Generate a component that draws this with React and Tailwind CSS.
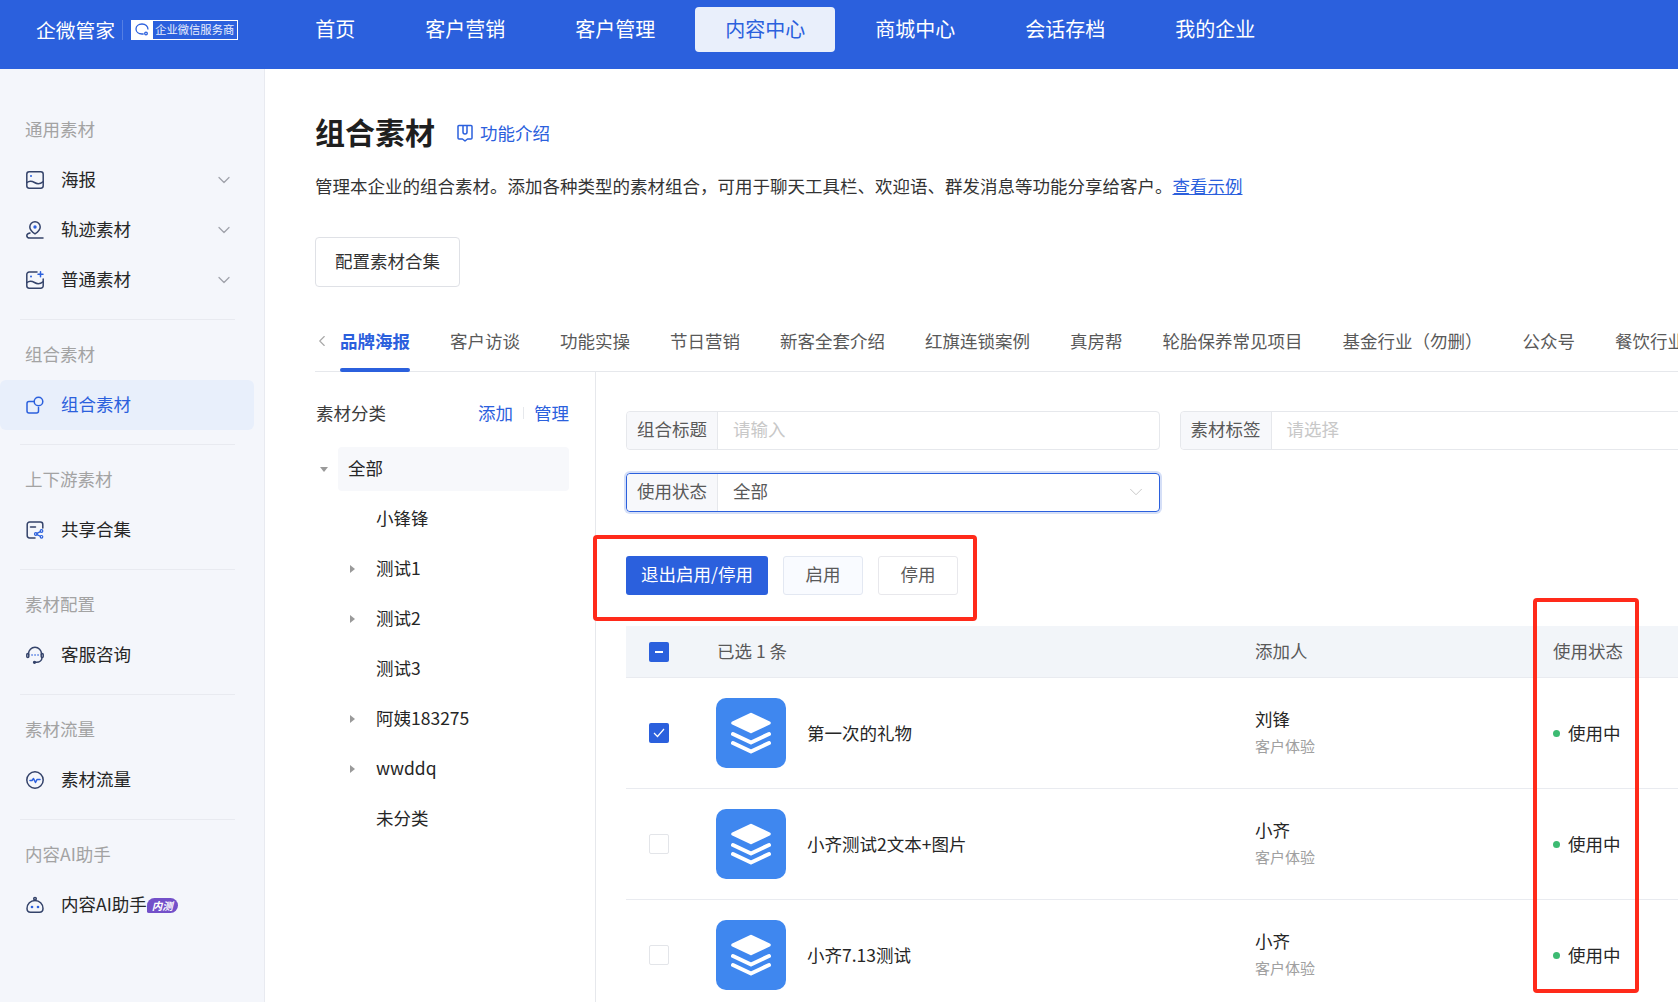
import { ChevronDown, ChevronLeft } from 'lucide-react';

const navItems = ['首页', '客户营销', '客户管理', '内容中心', '商城中心', '会话存档', '我的企业'];
const tabs = ['客户访谈', '功能实操', '节日营销', '新客全套介绍', '红旗连锁案例', '真房帮', '轮胎保养常见项目', '基金行业（勿删）', '公众号', '餐饮行业'];

const tree = [
  { name: '小锋锋' },
  { name: '测试1', arrow: true },
  { name: '测试2', arrow: true },
  { name: '测试3' },
  { name: '阿姨183275', arrow: true },
  { name: 'wwddq', arrow: true },
  { name: '未分类' },
];

const rows = [
  { title: '第一次的礼物', owner: '刘锋', checked: true },
  { title: '小齐测试2文本+图片', owner: '小齐' },
  { title: '小齐7.13测试', owner: '小齐' },
];

const Svg = ({ children }) => (
  <svg width="18" height="18" viewBox="0 0 18 18" fill="none" stroke="#34436a" strokeWidth="1.5" strokeLinecap="round" strokeLinejoin="round" className="shrink-0">
    {children}
  </svg>
);

const PosterIcon = () => (
  <Svg>
    <rect x="0.8" y="0.8" width="16.4" height="16.4" rx="2.4" />
    <path d="M1 11.5c3-2.500 5-1.600 7.500 0s5.500 1.800 8.500-.8" />
    <circle cx="5" cy="5" r="1" fill="#2b60dd" stroke="none" />
  </Svg>
);

const TrackIcon = () => (
  <Svg>
    <path d="M9 12.800c-3-1.900-5.200-3.900-5.200-6.800a5.200 5.200 0 0 1 10.400 0c0 2.900-2.200 4.900-5.200 6.800z" />
    <circle cx="9" cy="6" r="1.700" fill="#2b60dd" stroke="none" />
    <path d="M4 12c-1.900.5-3.200 1.200-3.200 2.400 0 1.600 1.400 2.600 3.200 2.600h13" />
  </Svg>
);

const NormalIcon = () => (
  <Svg>
    <path d="M11 1H3.200A2.400 2.400 0 0 0 .8 3.400v11.400a2.400 2.400 0 0 0 2.400 2.400h11.600a2.400 2.400 0 0 0 2.400-2.400V8" />
    <path d="M1 11.500c3-2.500 5-1.600 7.500 0s5.500 1.800 8.500-.8" />
    <circle cx="5" cy="5.500" r="1" fill="#2b60dd" stroke="none" />
    <path d="M14.500 0.800v5M12 3.300h5" stroke="#2b60dd" />
  </Svg>
);

const ComboIcon = () => (
  <Svg>
    <path d="M8 5.500H3a2 2 0 0 0-2 2V15a2 2 0 0 0 2 2h7.500a2 2 0 0 0 2-2v-3.500" stroke="#2b60dd" />
    <circle cx="12.500" cy="5.500" r="4.300" stroke="#2b60dd" />
  </Svg>
);

const ShareIcon = () => (
  <Svg>
    <path d="M16.800 7V3.400A2.400 2.400 0 0 0 14.400 1H3.600a2.400 2.400 0 0 0-2.400 2.400v11.200A2.400 2.400 0 0 0 3.600 17H9" />
    <path d="M4.500 6h5" />
    <g stroke="#2b60dd" strokeWidth="1.200">
      <circle cx="15.500" cy="10" r="1.300" />
      <circle cx="15.500" cy="15.800" r="1.300" />
      <circle cx="9.800" cy="13" r="1.300" />
      <path d="M11 12.400l3.300-1.800M11 13.600l3.300 1.600" />
    </g>
  </Svg>
);

const ServiceIcon = () => (
  <Svg>
    <path d="M2.500 8.500V7.800a6.500 6.500 0 0 1 13 0v.7" />
    <rect x="0.800" y="7.500" width="2" height="4" rx="1" />
    <rect x="15.200" y="7.500" width="2" height="4" rx="1" />
    <path d="M16 11.500c0 2.800-2.500 4.800-5.500 4.800H9" />
    <circle cx="8.500" cy="16.300" r="0.900" fill="#34436a" />
    <path d="M6 9h.1M9 9h.1M12 9h.1" stroke="#2b60dd" strokeWidth="1.600" />
  </Svg>
);

const FlowIcon = () => (
  <Svg>
    <circle cx="9" cy="9" r="8.200" />
    <path d="M4 9.500h2l1.500-2 2 4 1.500-3h3" stroke="#2b60dd" />
  </Svg>
);

const BotIcon = () => (
  <Svg>
    <path d="M1 12.500a8 8 0 0 1 16 0c0 2.500-1.500 3.700-3.500 3.700h-9C2.500 16.200 1 15 1 12.500z" />
    <circle cx="9" cy="2.800" r="1.300" />
    <path d="M9 4.100v.4" />
    <circle cx="6" cy="11" r="1.300" fill="#2b60dd" stroke="none" />
    <circle cx="12" cy="11" r="1.300" fill="#2b60dd" stroke="none" />
  </Svg>
);

const sideGroups = [
  {
    label: '通用素材',
    items: [
      { name: '海报', icon: PosterIcon, more: true },
      { name: '轨迹素材', icon: TrackIcon, more: true },
      { name: '普通素材', icon: NormalIcon, more: true },
    ],
  },
  { label: '组合素材', items: [{ name: '组合素材', icon: ComboIcon, active: true }] },
  { label: '上下游素材', items: [{ name: '共享合集', icon: ShareIcon }] },
  { label: '素材配置', items: [{ name: '客服咨询', icon: ServiceIcon }] },
  { label: '素材流量', items: [{ name: '素材流量', icon: FlowIcon }] },
  { label: '内容AI助手', items: [{ name: '内容AI助手', icon: BotIcon, beta: true }] },
];

const Logo = () => (
  <div className="flex items-center pl-[36px]">
    <span className="text-[19.800px] text-white">企微管家</span>
    <span className="ml-[7px] mr-[8px] h-[20px] w-px bg-white/20" />
    <div className="flex h-[20px] w-[107px] items-center border border-white">
      <div className="flex h-full w-[21px] items-center justify-center bg-white">
        <svg width="15" height="14" viewBox="0 0 15 14" fill="none" stroke="#2b60dd" strokeWidth="1.300">
          <path d="M7 1C3.500 1 1 3.200 1 6c0 2.800 2.500 5 6 5 .6 0 1.200-.1 1.700-.2" />
          <path d="M13 6.500C13 3.200 10.500 1 7 1" />
          <circle cx="11" cy="10.500" r="1.300" />
        </svg>
      </div>
      <span className="flex-1 whitespace-nowrap pl-[2px] text-[11.300px] text-white/90">企业微信服务商</span>
    </div>
  </div>
);

const Header = () => (
  <header className="flex h-[69px] shrink-0 bg-[#2b60dd] pb-[17px] pt-[7px]">
    <Logo />
    <nav className="ml-[47px] flex gap-[10px]">
      {navItems.map((item) => (
        <a key={item} className={`flex items-center rounded-[4px] px-[30px] pb-[2px] text-[20px] ${item === '内容中心' ? 'bg-[#e9effb] text-[#2b60dd]' : 'text-white'}`}>
          {item}
        </a>
      ))}
    </nav>
  </header>
);

const Sidebar = () => (
  <aside className="w-[265px] shrink-0 border-r border-[#e8eaf0] bg-[#f4f6fb] pt-[36px]">
    {sideGroups.map((group, index) => (
      <div key={group.label}>
        {index > 0 && <div className="ml-[20px] mt-[14px] mb-[10px] h-px w-[215px] bg-[#e8eaf0]" />}
        <div className="flex h-[50px] items-center pb-[2px] pl-[25px] text-[17.500px] text-[#a3a3a3]">{group.label}</div>
        {group.items.map((item) => (
          <div key={item.name} className={`flex h-[50px] w-[254px] items-center rounded-[6px] pl-[26px] ${item.active ? 'bg-[#e8effb]' : ''}`}>
            <item.icon />
            <span className={`ml-[17px] pb-[2px] text-[17.500px] ${item.active ? 'text-[#2b60dd]' : 'text-[#262626]'}`}>{item.name}</span>
            {item.beta && (
              <span className="rounded-[8px] rounded-bl-[2px] bg-[#7350c9] px-[5px] text-[10.500px] font-bold italic leading-[15px] text-white">内测</span>
            )}
            {item.more && <ChevronDown className="ml-auto mr-[20px] h-[20px] w-[20px] text-[#a0a3ab]" strokeWidth={1.5} />}
          </div>
        ))}
      </div>
    ))}
  </aside>
);

const Tabs = () => (
  <div className="mt-[33px] flex h-[52px] shrink-0 items-start border-b border-[#e6e8ec] text-[17.500px] leading-[24px]">
    <ChevronLeft className="-ml-[2px] mt-[12px] h-[18px] w-[18px] shrink-0 text-[#a8a8a8]" strokeWidth={1.500} />
    <div className="relative ml-[9px] h-full shrink-0 pt-[9px] font-bold text-[#2b60dd]">
      品牌海报
      <span className="absolute bottom-[-1px] left-0 h-[4px] w-full rounded-[2px] bg-[#2b60dd]" />
    </div>
    {tabs.map((tab) => (
      <div key={tab} className="ml-[40px] shrink-0 whitespace-nowrap pt-[9px] text-[#595959]">{tab}</div>
    ))}
  </div>
);

const Tree = () => (
  <div className="w-[281px] shrink-0 border-r border-[#e6e8ec] pr-[26px]">
    <div className="flex items-center pt-[28px] text-[17.500px] leading-[26px]">
      <span className="ml-px text-[#3c3c3c]">素材分类</span>
      <a className="ml-auto text-[#2b60dd]">添加</a>
      <span className="mx-[10px] h-[12px] w-px bg-[#e6e8ec]" />
      <a className="text-[#2b60dd]">管理</a>
    </div>
    <div className="mt-[21px] flex items-center">
      <span className="ml-[5px] h-0 w-0 border-x-[4.500px] border-t-[5px] border-x-transparent border-t-[#9a9a9a]" />
      <div className="ml-[10px] flex h-[44px] flex-1 items-center rounded-[4px] bg-[#f7f8fb] pb-[2px] pl-[10px] text-[17.500px] text-[#262626]">全部</div>
    </div>
    {tree.map((node) => (
      <div key={node.name} className="mt-[6px] flex h-[44px] items-center text-[17.500px] text-[#262626]">
        <span className="flex w-[61px] justify-end pr-[21px]">
          {node.arrow && <span className="h-0 w-0 border-y-[4.500px] border-l-[5px] border-y-transparent border-l-[#9a9a9a]" />}
        </span>
        <span className="pb-[2px]">{node.name}</span>
      </div>
    ))}
  </div>
);

const Field = ({ label, value, placeholder, focused, children }) => (
  <div className={`flex w-[534px] shrink-0 items-stretch rounded-[4px] border text-[17.500px] ${focused ? 'h-[39.500px] border-[#2b60dd] ring-2 ring-[#d5dff7]' : 'h-[39px] border-[#e6e8ec]'}`}>
    <div className="flex w-[91px] items-center justify-center rounded-l-[4px] border-r border-[#e6e8ec] bg-[#f7f8fb] pb-[2px] text-[#595959]">{label}</div>
    <div className={`flex flex-1 items-center pl-[15px] pr-[12px] ${placeholder ? 'text-[#c8c8c8]' : 'text-[#595959]'}`}>
      <span className="pb-[2px]">{placeholder || value}</span>
      {children}
    </div>
  </div>
);

const Checkbox = ({ state }) => {
  if (state === 'minus') {
    return (
      <span className="flex h-[20px] w-[20px] items-center justify-center rounded-[2px] bg-[#2b60dd]">
        <span className="h-[2px] w-[8px] bg-white" />
      </span>
    );
  }
  if (state === 'checked') {
    return (
      <span className="flex h-[20px] w-[20px] items-center justify-center rounded-[2px] bg-[#2b60dd]">
        <svg width="12" height="10" viewBox="0 0 12 10" fill="none" stroke="white" strokeWidth="1.200">
          <path d="M1 5l3.500 3.500L11 1" />
        </svg>
      </span>
    );
  }
  return <span className="h-[20px] w-[20px] rounded-[2px] border border-[#e3e5e9] bg-white" />;
};

const StackIcon = () => (
  <div className="flex h-[70px] w-[70px] shrink-0 items-center justify-center rounded-[10px] bg-[#3f87ef]">
    <svg width="70" height="70" viewBox="0 0 70 70" fill="none" stroke="white" strokeLinecap="round" strokeLinejoin="round">
      <path d="M35 16.500L53 25L35 33.500L17 25Z" fill="white" strokeWidth="3.500" />
      <path d="M17 36L35 44.500L53 36" strokeWidth="4" />
      <path d="M17 45L35 53.500L53 45" strokeWidth="4" />
    </svg>
  </div>
);

const Table = () => (
  <div className="mt-[31px]">
    <div className="flex h-[52px] items-center border-b border-[#e9ebf0] bg-[#f2f5f9] text-[17.500px] text-[#595959]">
      <div className="w-[91px] pl-[23px]">
        <Checkbox state="minus" />
      </div>
      <div className="w-[538px]">已选 1 条</div>
      <div className="w-[298px]">添加人</div>
      <div>使用状态</div>
    </div>
    {rows.map((row) => (
      <div key={row.title} className="flex h-[111px] items-center border-b border-[#e9ebf0] text-[17.500px] text-[#262626]">
        <div className="flex w-[90px] pl-[23px]">
          <Checkbox state={row.checked ? 'checked' : undefined} />
        </div>
        <div className="flex w-[539px] items-center">
          <StackIcon />
          <span className="ml-[21px]">{row.title}</span>
        </div>
        <div className="w-[298px] pb-[2px]">
          <div className="leading-[26px]">{row.owner}</div>
          <div className="mt-[2px] text-[15px] leading-[24px] text-[#a0a0a0]">客户体验</div>
        </div>
        <div className="flex items-center">
          <span className="h-[7px] w-[7px] rounded-full bg-[#3dbb72]" />
          <span className="ml-[8px]">使用中</span>
        </div>
      </div>
    ))}
  </div>
);

const Content = () => (
  <div className="min-w-0 flex-1 overflow-hidden pl-[30px] pt-[39px]">
    <div className="flex gap-[19.500px]">
      <Field label="组合标题" placeholder="请输入" />
      <Field label="素材标签" placeholder="请选择" />
    </div>
    <div className="mt-[22.500px]">
      <Field label="使用状态" value="全部" focused>
        <ChevronDown className="ml-auto h-[22px] w-[22px] text-[#c4c4c4]" strokeWidth={1} />
      </Field>
    </div>
    <div className="mt-[44px] flex gap-[15px] text-[17.500px]">
      <button className="h-[39px] w-[142px] rounded-[3px] bg-[#2b60dd] pb-[2px] text-white">退出启用/停用</button>
      <button className="h-[39px] w-[80px] rounded-[3px] border border-[#e3e8f2] bg-[#f9fbff] pb-[2px] text-[#595959]">启用</button>
      <button className="h-[39px] w-[80px] rounded-[3px] border border-[#e8e8ec] bg-white pb-[2px] text-[#595959]">停用</button>
    </div>
    <Table />
  </div>
);

export default function App() {
  return (
    <div className="relative flex h-screen w-screen flex-col overflow-hidden bg-white font-['Noto_Sans_CJK_SC','Noto_Sans',sans-serif]">
      <Header />
      <div className="flex min-h-0 flex-1">
        <Sidebar />
        <main className="flex min-w-0 flex-1 flex-col pl-[50px] pt-[44px]">
          <div className="flex h-[40px] items-center">
            <h1 className="pb-[4px] text-[30px] font-bold text-[#1f1f1f]">组合素材</h1>
            <svg width="18" height="18" viewBox="0 0 18 18" fill="none" stroke="#2b60dd" strokeWidth="1.500" strokeLinejoin="round" className="ml-[21px]">
              <path d="M2 2.500a1 1 0 0 1 1-1h12a1 1 0 0 1 1 1V14a1 1 0 0 1-1 1h-3.500L9 17l-2.500-2H3a1 1 0 0 1-1-1z" />
              <path d="M7 1.500V8a2 2 0 0 0 4 0V1.500" />
            </svg>
            <a className="ml-[6px] text-[17.500px] text-[#2b60dd]">功能介绍</a>
          </div>
          <p className="mt-[18.500px] h-[28px] text-[17.500px] leading-[28px] text-[#333333]">
            管理本企业的组合素材。添加各种类型的素材组合，可用于聊天工具栏、欢迎语、群发消息等功能分享给客户。
            <a className="text-[#2b60dd] underline">查看示例</a>
          </p>
          <button className="mt-[37.500px] h-[50px] w-[145px] shrink-0 rounded-[4px] border border-[#dfe1e6] pb-[2px] text-[17.500px] text-[#333333]">配置素材合集</button>
          <Tabs />
          <div className="flex min-h-0 flex-1">
            <Tree />
            <Content />
          </div>
        </main>
      </div>
      {/* red annotation frames drawn over the screenshot */}
      <div className="pointer-events-none absolute left-[593px] top-[535px] h-[86px] w-[384px] rounded-[4px] border-[4px] border-[#ff2a1a]" />
      <div className="pointer-events-none absolute left-[1533px] top-[598px] h-[395px] w-[106px] rounded-[4px] border-[4px] border-[#ff2a1a]" />
    </div>
  );
}
